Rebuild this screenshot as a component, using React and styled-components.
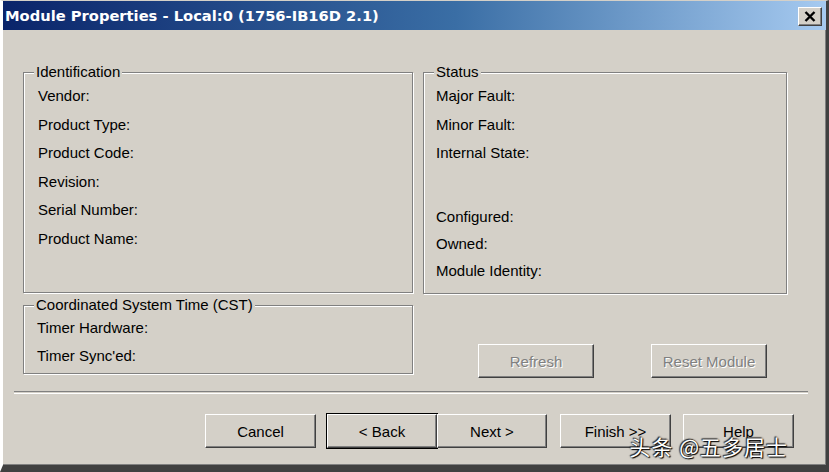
import React from 'react';
import styled, { createGlobalStyle, css } from 'styled-components';

const GlobalStyle = createGlobalStyle`
  html, body {
    margin: 0;
    padding: 0;
    background: #d4d0c8;
  }
  body {
    font-family: "Liberation Sans", Arial, sans-serif;
  }
`;

const Window = styled.div`
  position: relative;
  box-sizing: border-box;
  width: 829px;
  height: 472px;
  display: flex;
  flex-direction: column;
  background: #d4d0c8;
  border-style: solid;
  border-width: 1px 3px 7px 3px;
  border-color: #d4d0c8 #404040 #404040 #fff;
  box-shadow: inset -1px -1px 0 #808080;
  overflow: hidden;
`;

const TitleBar = styled.div`
  height: 29px;
  flex: none;
  display: flex;
  align-items: center;
  justify-content: space-between;
  padding: 0 4px 0 2px;
  background: linear-gradient(to right, #0a246a 0%, #3a6ea5 55%, #a6caf0 100%);
`;

const Title = styled.span`
  font-family: "DejaVu Sans", Verdana, sans-serif;
  font-weight: bold;
  font-size: 14.7px;
  color: #fff;
`;

const CloseButton = styled.button`
  width: 24px;
  height: 19px;
  padding: 0;
  display: flex;
  align-items: center;
  justify-content: center;
  background: #d4d0c8;
  border: 1px solid;
  border-color: #fff #404040 #404040 #fff;
  box-shadow: inset -1px -1px 0 #808080;
  margin-top: 1px;
`;

const Body = styled.div`
  flex: 1;
  display: flex;
  flex-direction: column;
`;

const Panels = styled.div`
  display: grid;
  grid-template-columns: 390px 364px;
  column-gap: 10px;
  margin: 42px 0 0 20px;
`;

const Column = styled.div`
  display: flex;
  flex-direction: column;
`;

const Group = styled.div`
  position: relative;
  box-sizing: border-box;
  height: ${p => p.$h}px;
  margin-top: ${p => p.$mt || 0}px;
  padding: ${p => p.$pt}px 0 0 ${p => p.$pl}px;
  border: 1px solid #808080;
  box-shadow: inset 1px 1px 0 #fff, 1px 1px 0 #fff;
  display: flex;
  flex-direction: column;
`;

const Legend = styled.span`
  position: absolute;
  top: -10px;
  left: 10px;
  padding: 0 2px;
  background: #d4d0c8;
  font-size: 15px;
  line-height: 18px;
  color: #000;
`;

const Label = styled.div`
  font-size: 15px;
  line-height: 17px;
  height: 17px;
  color: #000;
  margin-top: ${p => p.$gap || 0}px;
`;

const ActionRow = styled.div`
  display: flex;
  gap: 57px;
  margin: 50px 0 0 55px;
`;

const buttonFace = css`
  box-sizing: border-box;
  height: 34px;
  padding: 0;
  font-family: "Liberation Sans", Arial, sans-serif;
  font-size: 15px;
  background: #d4d0c8;
  border: 1px solid;
  border-color: #fff #404040 #404040 #fff;
  box-shadow: inset -1px -1px 0 #808080, inset 1px 1px 0 #d4d0c8;
`;

const Button = styled.button`
  ${buttonFace};
  width: ${p => p.$w || 111}px;
  margin-left: ${p => p.$ml || 0}px;
  color: ${p => (p.disabled ? '#808080' : '#000')};
  text-shadow: ${p => (p.disabled ? '1px 1px 0 #fff' : 'none')};
  ${p => p.$default && css`
    box-shadow: inset -1px -1px 0 #808080, 0 0 0 1px #000;
  `}
`;

const Separator = styled.div`
  margin: 13px 18px 0 11px;
  height: 1px;
  border-top: 1px solid #808080;
  border-bottom: 1px solid #fff;
`;

const Footer = styled.div`
  display: flex;
  justify-content: flex-end;
  margin-top: 20px;
  padding-right: 32px;
`;

const Watermark = styled.div`
  position: absolute;
  right: 38px;
  bottom: 4px;
  font-family: "Noto Sans CJK SC", "Liberation Sans", sans-serif;
  font-size: 21px;
  color: #fff;
  text-shadow: 0 0 2px #000, 1px 1px 1px #000, -1px -1px 1px #333;
  letter-spacing: 1px;
`;

const identification = ['Vendor:', 'Product Type:', 'Product Code:', 'Revision:', 'Serial Number:', 'Product Name:'];

export default function App() {
  return (
    <>
      <GlobalStyle />
      <Window>
        <TitleBar>
          <Title>Module Properties - Local:0 (1756-IB16D 2.1)</Title>
          <CloseButton aria-label="close">
            <svg width="12" height="11" viewBox="0 0 12 11">
              <path d="M1.5 1 L10.5 10 M10.5 1 L1.5 10" stroke="#000" strokeWidth="2.4" />
            </svg>
          </CloseButton>
        </TitleBar>
        <Body>
          <Panels>
            <Column>
              <Group $h={221} $pt={14} $pl={14}>
                <Legend>Identification</Legend>
                {identification.map((t, i) => (
                  <Label key={t} $gap={i ? 11.6 : 0}>{t}</Label>
                ))}
              </Group>
              <Group $h={69} $mt={12} $pt={13} $pl={13}>
                <Legend>Coordinated System Time (CST)</Legend>
                <Label>Timer Hardware:</Label>
                <Label $gap={11}>Timer Sync'ed:</Label>
              </Group>
            </Column>
            <Column>
              <Group $h={222} $pt={14} $pl={12}>
                <Legend>Status</Legend>
                <Label>Major Fault:</Label>
                <Label $gap={11.6}>Minor Fault:</Label>
                <Label $gap={11.6}>Internal State:</Label>
                <Label $gap={47}>Configured:</Label>
                <Label $gap={9.5}>Owned:</Label>
                <Label $gap={10}>Module Identity:</Label>
              </Group>
              <ActionRow>
                <Button $w={116} disabled>Refresh</Button>
                <Button $w={116} disabled>Reset Module</Button>
              </ActionRow>
            </Column>
          </Panels>
          <Separator />
          <Footer>
            <Button>Cancel</Button>
            <Button $w={110} $ml={11} $default>&lt; Back</Button>
            <Button $w={110}>Next &gt;</Button>
            <Button $ml={13}>Finish &gt;&gt;</Button>
            <Button $ml={12}>Help</Button>
          </Footer>
        </Body>
        <Watermark>头条 @五多居士</Watermark>
      </Window>
    </>
  );
}
